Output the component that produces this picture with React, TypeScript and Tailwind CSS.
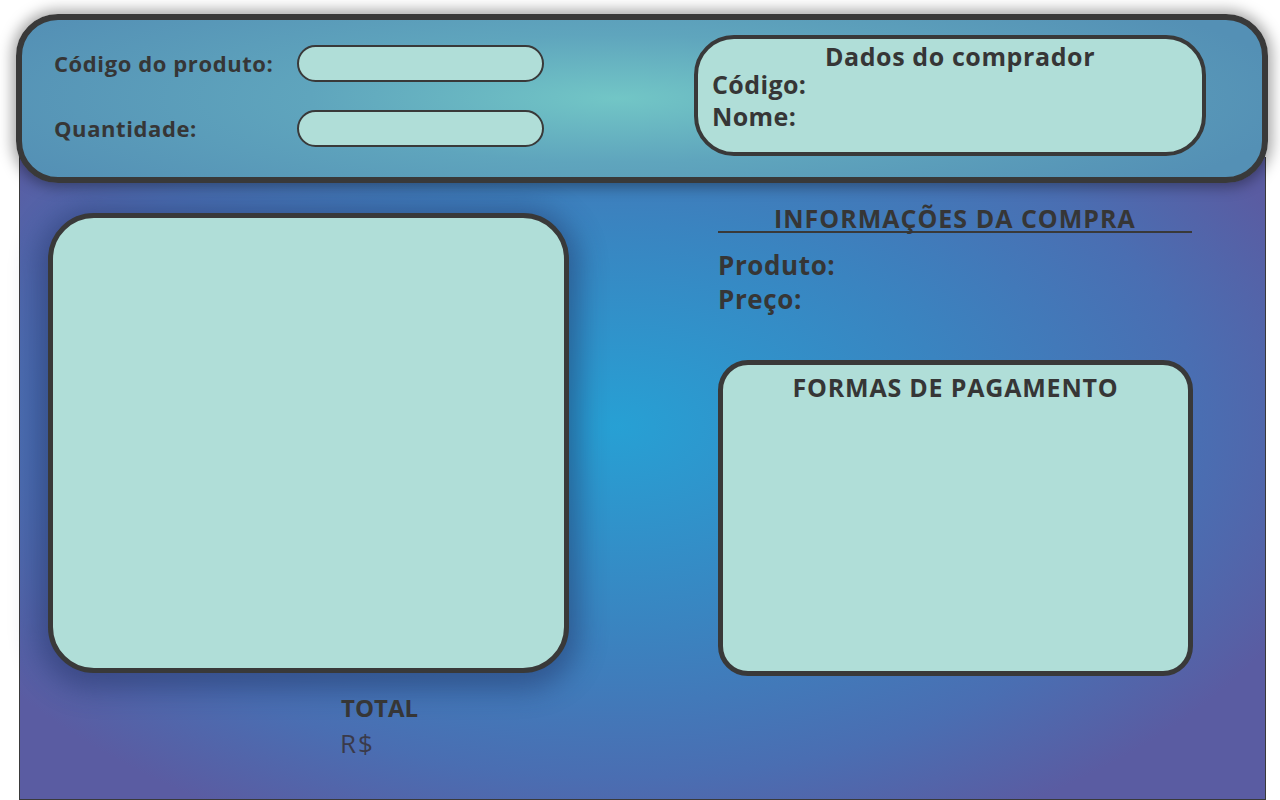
export default function App() {
  const font = { fontFamily: '"Open Sans", "Noto Sans", sans-serif' };
  return (
    <div className="w-[1280px] h-[800px] bg-white overflow-hidden text-[#363636]" style={font}>
      {/* cabeçalho */}
      <div className="relative z-10 mt-[14px] ml-[16px] w-[1252px] h-[169px] rounded-[42px] border-[6px] border-[#393939] bg-[radial-gradient(ellipse_55%_90%_at_48%_50%,#72c6c6_0%,#5fa5bd_45%,#5490b5_100%)] shadow-[0_0_14px_4px_rgba(0,0,0,0.35)] flex items-start justify-between pl-[32px] pr-[56px]">
        <div className="flex flex-col gap-[28px] pt-[25px]">
          <div className="flex items-center gap-[14px]">
            <span className="w-[229px] text-[22px] tracking-[0.6px] font-bold">Código do produto:</span>
            <div className="w-[247px] h-[37px] rounded-full border-[2.5px] border-[#393939] bg-[#b0ded8]" />
          </div>
          <div className="flex items-center gap-[14px]">
            <span className="w-[229px] text-[22px] tracking-[0.6px] font-bold">Quantidade:</span>
            <div className="w-[247px] h-[37px] rounded-full border-[2.5px] border-[#393939] bg-[#b0ded8]" />
          </div>
        </div>
        <div className="mt-[15px] w-[512px] h-[121px] rounded-[40px] border-[4px] border-[#393939] bg-[#b0ded8] px-[14px] flex flex-col">
          <div className="pl-[20px] text-center text-[25px] tracking-[0.6px] font-bold leading-[34px]">Dados do comprador</div>
          <div className="text-[25px] font-bold tracking-[0.4px] leading-[32px] -mt-[5px]">Código:</div>
          <div className="text-[25px] font-bold tracking-[0.4px] leading-[32px]">Nome:</div>
        </div>
      </div>

      {/* painel */}
      <div className="-mt-[26px] ml-[19px] w-[1247px] h-[643px] border-x border-b border-[#3a3a3a] bg-[radial-gradient(ellipse_60%_70%_at_48%_42%,#27a0d4_0%,#3a84c0_45%,#4a6eb2_78%,#5a5ca2_100%)] flex pt-[56px] pl-[28px]">
        <div className="w-[521px] flex flex-col">
          <div className="w-[521px] h-[460px] rounded-[46px] border-[5px] border-[#393939] bg-[#b0ded8] shadow-[0_6px_28px_10px_rgba(30,40,90,0.45)]" />
          <div className="ml-[293px] mt-[20px] text-[24px] font-bold leading-[30px]">TOTAL</div>
          <div className="ml-[292px] text-[26px] tracking-[2px] leading-[40px] text-[#3a3a4a]">R$</div>
        </div>
        <div className="ml-[149px] w-[474px] flex flex-col">
          <div className="relative h-[20px] border-b-2 border-[#393939]">
            <div className="absolute left-[56px] -top-[11px] text-[25px] tracking-[1px] font-bold leading-[32px]">INFORMAÇÕES DA COMPRA</div>
          </div>
          <div className="mt-[15px] text-[26px] tracking-[0.6px] font-bold leading-[34px]">Produto:</div>
          <div className="text-[26px] tracking-[0.6px] font-bold leading-[34px]">Preço:</div>
          <div className="mt-[44px] w-[475px] h-[316px] rounded-[30px] border-[5px] border-[#393939] bg-[#b0ded8] pt-[6px]">
            <div className="text-center text-[25px] tracking-[0.8px] font-bold leading-[32px]">FORMAS DE PAGAMENTO</div>
          </div>
        </div>
      </div>
    </div>
  );
}
